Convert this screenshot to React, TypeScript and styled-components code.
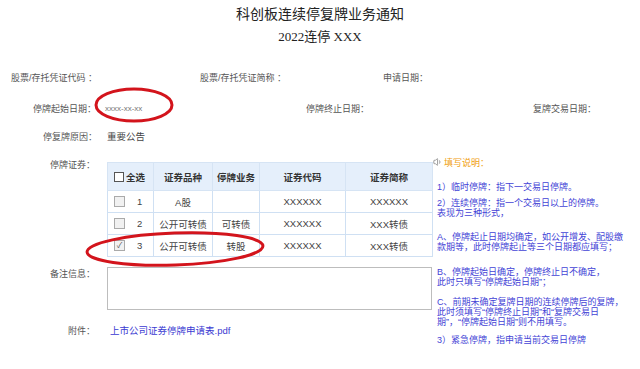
import styled, { createGlobalStyle } from 'styled-components';
import { Volume1 } from 'lucide-react';

const GlobalStyle = createGlobalStyle`
  body {
    margin: 0;
    background: #fff;
    font-family: "Liberation Sans", "Noto Sans CJK SC", sans-serif;
  }
`;

const Page = styled.div`
  position: relative;
  width: 640px;
  height: 369px;
  overflow: hidden;
  color: #555;
  font-size: 9px;
`;

const Header = styled.header`
  text-align: center;
  padding-top: 6px;
`;

const Title = styled.h1`
  margin: 0;
  font-family: "Liberation Serif", "Noto Sans CJK SC", serif;
  font-size: 14px;
  line-height: 18px;
  font-weight: 400;
  color: #222;
`;

const SubTitle = styled.h2`
  margin: 5px 0 0;
  font-family: "Liberation Serif", "Noto Sans CJK SC", serif;
  font-size: 13px;
  line-height: 16px;
  font-weight: 400;
  color: #222;
`;

const Fields = styled.div`
  display: flex;
  flex-direction: column;
`;

const Row = styled.div<{ $mt: number }>`
  display: flex;
  align-items: center;
  height: 14px;
  margin-top: ${({ $mt }) => $mt}px;
`;

const Cell = styled.div<{ $w?: number }>`
  display: flex;
  align-items: center;
  width: ${({ $w }) => ($w ? `${$w}px` : 'auto')};
  flex-shrink: 0;
`;

const Label = styled.span<{ $w?: number }>`
  display: inline-block;
  width: ${({ $w }) => ($w ? `${$w}px` : 'auto')};
  text-align: ${({ $w }) => ($w ? 'right' : 'left')};
  white-space: nowrap;
  flex-shrink: 0;
`;

const Value = styled.span<{ $ml: number; $small?: boolean }>`
  margin-left: ${({ $ml }) => $ml}px;
  font-size: ${({ $small }) => ($small ? '8px' : '9.5px')};
  color: ${({ $small }) => ($small ? '#777' : '#444')};
  white-space: nowrap;
`;

const Main = styled.div`
  display: grid;
  grid-template-columns: 432px 1fr;
  margin-top: 12px;
`;

const LeftCol = styled.div`
  display: flex;
  flex-direction: column;
  padding-top: 7px;
`;

const Line = styled.div<{ $mt?: number }>`
  display: flex;
  align-items: flex-start;
  margin-top: ${({ $mt }) => $mt ?? 0}px;
`;

const SideLabel = styled.span<{ $up?: boolean }>`
  width: 95px;
  text-align: right;
  line-height: 14px;
  flex-shrink: 0;
  margin-top: ${({ $up }) => ($up ? '-4px' : '0')};
`;

const Table = styled.table`
  margin-left: 12px;
  width: 325px;
  border-collapse: collapse;
  table-layout: fixed;
  font-size: 9.5px;
  color: #444;
  text-align: center;

  th, td {
    border: 1px solid #cfe0f3;
    padding: 0;
  }

  th {
    height: 27px;
    background: #e5effb;
    font-weight: bold;
    color: #333;
    border-color: #d6e4f4;
  }

  td {
    height: 21px;
  }
`;

const FirstCell = styled.div`
  display: flex;
  align-items: center;
  padding-left: 6px;
`;

const Box = styled.span<{ $head?: boolean }>`
  display: inline-flex;
  align-items: center;
  justify-content: center;
  width: ${({ $head }) => ($head ? '8px' : '9px')};
  height: ${({ $head }) => ($head ? '8px' : '9px')};
  border: 1px solid ${({ $head }) => ($head ? '#555' : '#aaa')};
  background: ${({ $head }) => ($head ? '#fff' : '#f1f1f1')};
  font-size: 8px;
  line-height: 1;
  color: #555;
`;

const Num = styled.span`
  margin-left: 12px;
`;

const HeadText = styled.span`
  margin-left: 2px;
`;

const Remarks = styled.textarea`
  margin-left: 12px;
  width: 325px;
  height: 43px;
  box-sizing: border-box;
  border: 1px solid #bdbdbd;
  resize: none;
  padding: 0;
  background: #fff;
`;

const FileLink = styled.a`
  margin-left: 15px;
  line-height: 14px;
  font-size: 9.5px;
  color: #3a3ad2;
  text-decoration: none;
`;

const Notes = styled.div`
  display: flex;
  flex-direction: column;
  color: #4343d6;
  font-size: 9px;
`;

const NotesHead = styled.div`
  display: flex;
  align-items: center;
  height: 14px;
  margin-left: 1px;
  color: #f0a010;
  gap: 1px;
`;

const Para = styled.p<{ $mt: number }>`
  margin: ${({ $mt }) => $mt}px 0 0;
  padding-left: 5px;
  line-height: 10px;
  white-space: nowrap;
`;

const Mark = styled.svg`
  position: absolute;
  pointer-events: none;
`;

export default function App() {
  return (
    <Page>
      <GlobalStyle />
      <Header>
        <Title>科创板连续停复牌业务通知</Title>
        <SubTitle>2022连停 XXX</SubTitle>
      </Header>

      <Fields>
        <Row $mt={25}>
          <Cell $w={200}>
            <Label $w={97}>股票/存托凭证代码 ：</Label>
          </Cell>
          <Cell $w={183}>
            <Label>股票/存托凭证简称 ：</Label>
          </Cell>
          <Cell>
            <Label>申请日期：</Label>
          </Cell>
        </Row>
        <Row $mt={17}>
          <Cell $w={306}>
            <Label $w={96}>停牌起始日期：</Label>
            <Value $ml={9} $small>xxxx-xx-xx</Value>
          </Cell>
          <Cell $w={227}>
            <Label>停牌终止日期：</Label>
          </Cell>
          <Cell>
            <Label>复牌交易日期：</Label>
          </Cell>
        </Row>
        <Row $mt={14}>
          <Label $w={97}>停复牌原因：</Label>
          <Value $ml={10}>重要公告</Value>
        </Row>
      </Fields>

      <Main>
        <LeftCol>
          <Line>
            <SideLabel $up>停牌证券：</SideLabel>
            <Table>
              <colgroup>
                <col style={{ width: 46 }} />
                <col style={{ width: 59 }} />
                <col style={{ width: 47 }} />
                <col style={{ width: 86 }} />
                <col style={{ width: 87 }} />
              </colgroup>
              <thead>
                <tr>
                  <th>
                    <FirstCell>
                      <Box $head />
                      <HeadText>全选</HeadText>
                    </FirstCell>
                  </th>
                  <th>证券品种</th>
                  <th>停牌业务</th>
                  <th>证券代码</th>
                  <th>证券简称</th>
                </tr>
              </thead>
              <tbody>
                <tr>
                  <td>
                    <FirstCell>
                      <Box />
                      <Num>1</Num>
                    </FirstCell>
                  </td>
                  <td>A股</td>
                  <td></td>
                  <td>XXXXXX</td>
                  <td>XXXXXX</td>
                </tr>
                <tr>
                  <td>
                    <FirstCell>
                      <Box />
                      <Num>2</Num>
                    </FirstCell>
                  </td>
                  <td>公开可转债</td>
                  <td>可转债</td>
                  <td>XXXXXX</td>
                  <td>XXX转债</td>
                </tr>
                <tr>
                  <td>
                    <FirstCell>
                      <Box>✓</Box>
                      <Num>3</Num>
                    </FirstCell>
                  </td>
                  <td>公开可转债</td>
                  <td>转股</td>
                  <td>XXXXXX</td>
                  <td>XXX转债</td>
                </tr>
              </tbody>
            </Table>
          </Line>

          <Line $mt={10}>
            <SideLabel>备注信息：</SideLabel>
            <Remarks />
          </Line>

          <Line $mt={14}>
            <SideLabel>附件：</SideLabel>
            <FileLink href="#">上市公司证券停牌申请表.pdf</FileLink>
          </Line>
        </LeftCol>

        <Notes>
          <NotesHead>
            <Volume1 size={10} color="#888" strokeWidth={2} />
            <span>填写说明：</span>
          </NotesHead>
          <Para $mt={13}>1）临时停牌：指下一交易日停牌。</Para>
          <Para $mt={6}>
            2）连续停牌：指一个交易日以上的停牌。
            <br />
            表现为三种形式，
          </Para>
          <Para $mt={14}>
            A、停牌起止日期均确定，如公开增发、配股缴
            <br />
            款期等，此时停牌起止等三个日期都应填写；
          </Para>
          <Para $mt={15}>
            B、停牌起始日确定，停牌终止日不确定，
            <br />
            此时只填写“停牌起始日期”；
          </Para>
          <Para $mt={10}>
            C、前期未确定复牌日期的连续停牌后的复牌，
            <br />
            此时须填写“停牌终止日期”和“复牌交易日
            <br />
            期”，“停牌起始日期”则不用填写。
          </Para>
          <Para $mt={8}>3）紧急停牌，指申请当前交易日停牌</Para>
        </Notes>
      </Main>

      <Mark width="84" height="40" style={{ left: 92, top: 85 }}>
        <ellipse cx="42" cy="20" rx="38" ry="16" fill="none" stroke="#d3141c" strokeWidth="3" />
      </Mark>
      <Mark width="184" height="40" style={{ left: 83, top: 229 }}>
        <ellipse
          cx="92"
          cy="20"
          rx="88"
          ry="16"
          fill="none"
          stroke="#d3141c"
          strokeWidth="3"
          transform="rotate(-2 92 20)"
        />
      </Mark>
    </Page>
  );
}
